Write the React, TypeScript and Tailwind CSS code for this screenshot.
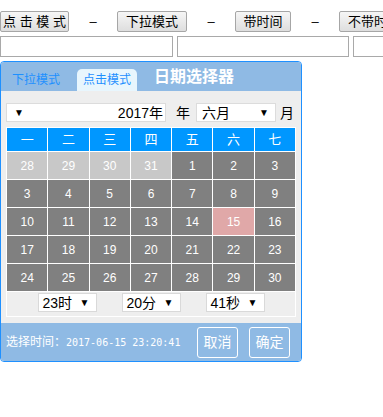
import React from 'react';

const FONT = "font-['Liberation_Sans','Noto_Sans_CJK_SC',sans-serif]";

const weekDays = ['一', '二', '三', '四', '五', '六', '七'];

// 6月 2017: 上月 28-31 开头
const days: { d: number; prev?: boolean }[] = [
  { d: 28, prev: true },
  { d: 29, prev: true },
  { d: 30, prev: true },
  { d: 31, prev: true },
  { d: 1 },
  { d: 2 },
  { d: 3 },
  ...Array.from({ length: 28 }, (_, i) => ({ d: i + 3 })),
];

const TopButton = ({ label, w }: { label: string; w: string }) => (
  <button
    className={`${w} h-[21px] shrink-0 border border-[#a6a6a6] rounded-[2px] bg-gradient-to-b from-[#f6f6f6] to-[#dedede] text-[13px] text-black leading-none flex items-center justify-center whitespace-nowrap`}
  >
    {label}
  </button>
);

const Dash = () => <span className="w-[48px] shrink-0 text-center text-[13px] leading-none">–</span>;

const Arrow = () => <span className="text-[10px] leading-none text-black">▼</span>;

const TimeSelect = ({ label }: { label: string }) => (
  <div className="w-[59px] h-[19px] bg-white border border-[#d9d9d9] flex items-center justify-between pl-[4px] pr-[6px]">
    <span className="text-[14px] leading-none">{label}</span>
    <Arrow />
  </div>
);

const App: React.FC = () => {
  return (
    <div className={`${FONT} w-[383px] h-[417px] overflow-hidden bg-white text-black`}>
      <div className="flex items-center pt-[11px] w-[500px]">
        <TopButton label="点 击 模 式" w="w-[69px]" />
        <Dash />
        <TopButton label="下拉模式" w="w-[70px]" />
        <Dash />
        <TopButton label="带时间" w="w-[56px]" />
        <Dash />
        <TopButton label="不带时间" w="w-[70px]" />
      </div>
      <div className="flex gap-[4px] mt-[4px] w-[600px]">
        <input className="w-[173px] h-[21px] border border-[#a9a9a9] outline-none" />
        <input className="w-[172px] h-[21px] border border-[#a9a9a9] outline-none" />
        <input className="w-[172px] h-[21px] border border-[#a9a9a9] outline-none" />
      </div>

      <div className="mt-[4px] w-[302px] border border-[#1e90ff] rounded-[4px] overflow-hidden">
        {/* header */}
        <div className="h-[29px] bg-[#8fbae4] flex items-end">
          <span className="ml-[11px] mb-[5px] text-[12px] text-[#1e90ff] leading-none">下拉模式</span>
          <span className="ml-[17px] w-[60px] h-[22px] bg-[#e8f6fd] rounded-t-[5px] flex items-center justify-center text-[12px] text-[#1e90ff] leading-none">
            点击模式
          </span>
          <span className="ml-[17px] self-center text-[16px] font-bold text-white leading-none">日期选择器</span>
        </div>

        {/* body */}
        <div className="bg-[#eeeeee] pt-[12px] pb-[6px] px-[5px]">
          <div className="flex items-center h-[19px]">
            <div className="w-[160px] h-[19px] bg-white border border-[#dcdcdc] flex items-center justify-between pl-[7px] pr-[2px]">
              <Arrow />
              <span className="text-[14px] leading-none">2017年</span>
            </div>
            <span className="ml-[10px] text-[14px] leading-none">年</span>
            <div className="ml-[6px] w-[80px] h-[19px] bg-white border border-[#dcdcdc] flex items-center justify-between pl-[5px] pr-[6px]">
              <span className="text-[14px] leading-none">六月</span>
              <Arrow />
            </div>
            <span className="ml-[4px] text-[14px] leading-none">月</span>
          </div>

          <div className="mt-[5px] w-[290px] bg-white p-px">
            <div className="grid grid-cols-7 gap-px">
              {weekDays.map((w) => (
                <div key={w} className="h-[23px] bg-[#0097ff] text-white text-[13px] flex items-center justify-center">
                  {w}
                </div>
              ))}
              {days.map((c, i) => (
                <div
                  key={i}
                  className={`h-[27px] flex items-center justify-center text-[12px] text-white ${
                    c.prev ? 'bg-[#c8c8c8]' : c.d === 15 ? 'bg-[#e0a8a8]' : 'bg-[#808080]'
                  }`}
                >
                  {c.d}
                </div>
              ))}
            </div>
            <div className="mt-px h-[24px] bg-[#eeeeee] flex items-start justify-center gap-[25px] pt-px">
              <TimeSelect label="23时" />
              <TimeSelect label="20分" />
              <TimeSelect label="41秒" />
            </div>
          </div>
        </div>

        {/* footer */}
        <div className="h-[38px] bg-[#8fbae4] flex items-center pl-[5px] pr-[11px]">
          <span className="text-[12px] text-white leading-none whitespace-nowrap">
            选择时间：<span className="font-['DejaVu_Sans_Mono',monospace] text-[10px]">2017-06-15 23:20:41</span>
          </span>
          <div className="ml-auto flex gap-[11px]">
            <button className="w-[41px] h-[31px] border border-white rounded-[3px] text-white text-[14px] flex items-center justify-center">
              取消
            </button>
            <button className="w-[41px] h-[31px] border border-white rounded-[3px] text-white text-[14px] flex items-center justify-center">
              确定
            </button>
          </div>
        </div>
      </div>
    </div>
  );
};

export default App;
